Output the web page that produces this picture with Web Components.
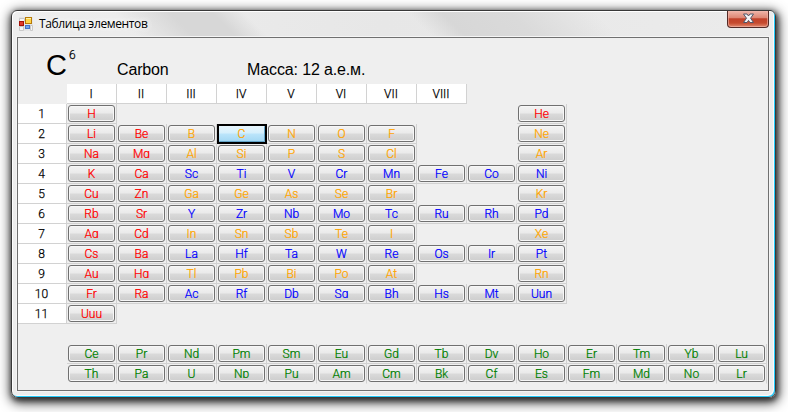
<!DOCTYPE html>
<html lang="ru"><head><meta charset="utf-8"><title>Таблица элементов</title>
<style>html,body{margin:0;width:788px;height:412px;overflow:hidden;background:#fff}body{font:11px "Liberation Sans",Arial,sans-serif;color:#000}</style></head>
<body><glass-window caption="Таблица элементов">
<element-summary symbol="C" number="6" name="Carbon" mass="Масса: 12 а.е.м."></element-summary>
<periodic-table></periodic-table>
</glass-window>
<script>
class GlassWindow extends HTMLElement{
 constructor(){super();this.attachShadow({mode:'open'}).innerHTML=`<style>
 :host{display:block;width:788px;height:412px;padding:10px 12px 14px 11px;box-sizing:border-box;background:#fff}
 .frame{box-sizing:border-box;width:765px;height:388px;border:1px solid #383838;border-radius:6px 6px 7px 7px;padding:0 6px 6px 5px;
 display:grid;grid-template-rows:26px 354px;
 background:linear-gradient(45deg,transparent 90px,#d7d7d7 130px,#d7d7d7 160px,transparent 182px,transparent 298px,#d7d7d7 322px,#dadada 370px,transparent 430px) 0 0/740px 27px no-repeat,linear-gradient(100deg,#eee,#e7e7e7 45%,#ececec);
 box-shadow:inset 1px 1px #fff,inset -1px -1px #22cafa,inset -2px -2px #fafafa,1px 2px 5px 1px rgba(0,0,0,.5),1px 3px 12px 2px rgba(0,0,0,.72)}
 header{display:flex;align-items:flex-start;padding-left:2px}
 .icon{margin-top:6px;width:14px;height:14px}
 h1{margin:5px auto 0 6px;font:12px/16px "Open Sans","Noto Sans",sans-serif;letter-spacing:-.36px;text-shadow:0 0 7px #fff,0 0 7px #fff}
 button{box-sizing:border-box;margin:0;padding:0;width:42px;height:17px;border:1px solid #542b27;border-top:0;border-radius:0 0 4px 4px;
 background:linear-gradient(#efb5a9,#dd8572 44%,#c1412a 48%,#c64b2f 75%,#e38b70);box-shadow:inset 0 0 0 1px #f2b8ab99;display:flex;justify-content:center}
 button svg{margin-top:2px}
 main{box-sizing:border-box;width:752px;height:354px;border:1px solid #707070;background:#efefef;box-shadow:0 0 0 1px #f5f5f5;display:grid;grid-template-rows:46px 1fr}
 </style><div class="frame"><header>
 <svg class="icon" viewBox="0 0 14 14"><rect width="14" height="14" fill="#e5e5e5"/><path d="M.5 1.5h5v3h-5zM.5 9.5h4v4h-4zM11.5 8.5h2v5h-2z" fill="#f5f5f5" stroke="#c9c9c9"/><rect x="6.5" y=".5" width="6" height="6" fill="#ffd447" stroke="#b77a08"/><path d="M7 1.500h5" stroke="#fff2a0"/><rect x=".5" y="4.500" width="4" height="4" fill="#de3b2c" stroke="#a51208"/><rect x="6.500" y="8.500" width="4" height="3" fill="#72a4ee" stroke="#4475c7"/></svg>
 <h1></h1><button aria-label="Закрыть"><svg width="13" height="11" viewBox="0 0 13 11"><path d="M1.500 1H5l1.500 2L8 1h3.500L8.600 5.200 11.500 9.500H8L6.500 7.400 5 9.500H1.500l3-4.300Z" fill="#f4f4f6" stroke="#525668" stroke-width="1"/></svg></button>
 </header><main><slot></slot></main></div>`;this.shadowRoot.querySelector('h1').textContent=this.getAttribute('caption')}
}
customElements.define('glass-window',GlassWindow);
class ElementSummary extends HTMLElement{
 constructor(){super();const a=n=>this.getAttribute(n);this.attachShadow({mode:'open'}).innerHTML=`<style>
 :host{display:grid;grid-template-columns:23px 48px 130px 1fr;padding-left:28px;font-size:16px;align-items:start;white-space:nowrap}
 b{font-weight:400;font-size:29px;line-height:34px;margin-top:10px}sup{font:300 12px/13px Roboto,sans-serif;margin-top:11px;-webkit-text-stroke:.25px}span{line-height:20px;margin-top:22px;letter-spacing:-.15px}
 </style><b>${a('symbol')}</b><sup>${a('number')}</sup><span>${a('name')}</span><span>${a('mass')}</span>`}
}
customElements.define('element-summary',ElementSummary);
class ElementCell extends HTMLElement{
 constructor(){super();this.attachShadow({mode:'open'}).innerHTML=`<style>
 :host{display:block;box-sizing:border-box;width:50px;height:20px;padding:1px 2px 2px 1px;border-right:1px solid #d2d2d2;border-bottom:1px solid #d2d2d2}
 div{box-sizing:border-box;width:47px;height:17px;border:1px solid #707070;border-radius:3px;background:linear-gradient(#f3f3f3,#eaeaea 48%,#dadada 52%,#cdcdcd);box-shadow:inset 0 0 0 1px #f7f7f7;text-align:center}
 span{display:block;height:12px;line-height:16px;overflow:hidden}
 :host([last]){border-bottom-color:transparent}
 :host([selected]){border:2px solid #000;padding:0}
 :host([selected]) div{width:46px;height:16px;border:1px solid #64a5c8;border-width:0 1px 1px 0;border-radius:1px;background:linear-gradient(#e8f6fd,#d5effc 48%,#bce5fb 52%,#a4d8f4);box-shadow:none}
 :host([selected]) span{height:12px;line-height:16px}
 </style><div><span><slot></slot></span></div>`}
}
customElements.define('element-cell',ElementCell);
class HeaderCell extends HTMLElement{
 constructor(){super();this.attachShadow({mode:'open'}).innerHTML=`<style>:host{display:block;box-sizing:border-box;height:20px;line-height:20px;padding-right:1px;text-align:center;background:#fff;border-right:1px solid #d2d2d2;border-bottom:1px solid #d2d2d2}</style><slot></slot>`}
}
customElements.define('header-cell',HeaderCell);
class PeriodicTable extends HTMLElement{
 constructor(){super();
 const rows=['H:r ........ He:r','Li:r Be:r B:o C:o N:o O:o F:o .. Ne:o','Na:r Mg:r Al:o Si:o P:o S:o Cl:o .. Ar:o','K:r Ca:r Sc:b Ti:b V:b Cr:b Mn:b Fe:b Co:b Ni:b','Cu:r Zn:r Ga:o Ge:o As:o Se:o Br:o .. Kr:o','Rb:r Sr:r Y:b Zr:b Nb:b Mo:b Tc:b Ru:b Rh:b Pd:b','Ag:r Cd:r In:o Sn:o Sb:o Te:o I:o .. Xe:o','Cs:r Ba:r La:b Hf:b Ta:b W:b Re:b Os:b Ir:b Pt:b','Au:r Hg:r Tl:o Pb:o Bi:o Po:o At:o .. Rn:o','Fr:r Ra:r Ac:b Rf:b Db:b Sg:b Bh:b Hs:b Mt:b Uun:b','Uuu:r'];
 const colors={r:'#f00',o:'#ffa500',b:'#00f',g:'#008000'};
 const at=(r,c)=>`grid-row:${r};grid-column:${c}`;let h='';
 ['I','II','III','IV','V','VI','VII','VIII'].forEach((t,i)=>h+=`<header-cell style="${at(1,i+2)}">${t}</header-cell>`);
 rows.forEach((line,r)=>{h+=`<header-cell style="${at(r+2,1)}">${r+1}</header-cell>`;let c=2;
  line.split(' ').forEach(t=>{if(t[0]==='.'){c+=t.length;return}const [s,k]=t.split(':');h+=`<element-cell ${s==='C'?'selected':''} style="${at(r+2,c++)};color:${colors[k]}">${s}</element-cell>`})});
 ['Ce Pr Nd Pm Sm Eu Gd Tb Dy Ho Er Tm Yb Lu','Th Pa U Np Pu Am Cm Bk Cf Es Fm Md No Lr'].forEach((l,r)=>l.split(' ').forEach((s,c)=>h+=`<element-cell ${r?'last':''} style="${at(r+14,c+2)};color:${colors.g}">${s}</element-cell>`));
 this.attachShadow({mode:'open'}).innerHTML=`<style>:host{display:grid;grid-template-columns:49px repeat(14,50px);grid-template-rows:repeat(15,20px);align-content:start;font:300 12px Roboto,"Liberation Sans",sans-serif;-webkit-text-stroke:.25px}</style>${h}`}
}
customElements.define('periodic-table',PeriodicTable);
</script></body></html>
